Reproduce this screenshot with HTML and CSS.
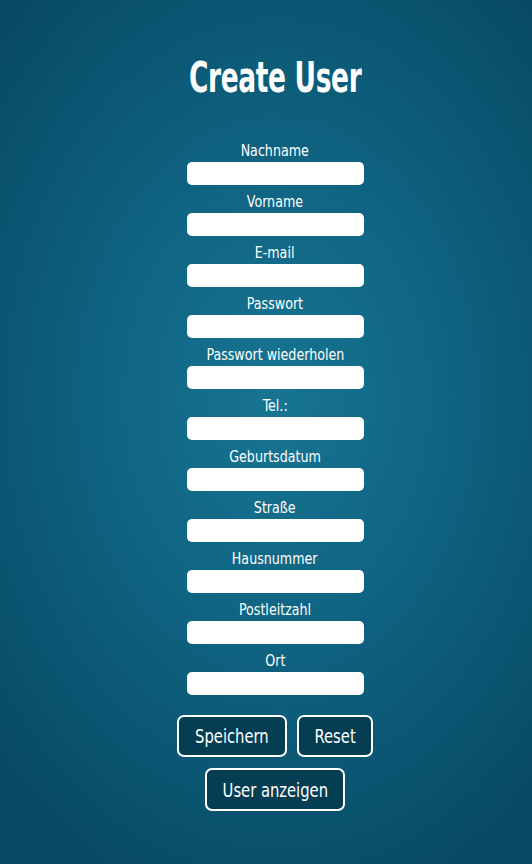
FILE: index.html
```html
<!DOCTYPE html>
<html lang="de">
<head>
<meta charset="utf-8">
<title>Create User</title>
<link rel="stylesheet" href="styles.css">
</head>
<body>
<main class="page">
  <h1 class="title"><span>Create User</span></h1>
  <form class="form">
    <label class="field"><span class="label">Nachname</span><input class="input" type="text"></label>
    <label class="field"><span class="label">Vorname</span><input class="input" type="text"></label>
    <label class="field"><span class="label">E-mail</span><input class="input" type="text"></label>
    <label class="field"><span class="label">Passwort</span><input class="input" type="password"></label>
    <label class="field"><span class="label">Passwort wiederholen</span><input class="input" type="password"></label>
    <label class="field"><span class="label">Tel.:</span><input class="input" type="text"></label>
    <label class="field"><span class="label">Geburtsdatum</span><input class="input" type="text"></label>
    <label class="field"><span class="label">Straße</span><input class="input" type="text"></label>
    <label class="field"><span class="label">Hausnummer</span><input class="input" type="text"></label>
    <label class="field"><span class="label">Postleitzahl</span><input class="input" type="text"></label>
    <label class="field"><span class="label">Ort</span><input class="input" type="text"></label>
    <div class="actions">
      <div class="row">
        <button type="button" class="btn btn-save"><span>Speichern</span></button>
        <button type="reset" class="btn btn-reset"><span>Reset</span></button>
      </div>
      <div class="row">
        <button type="button" class="btn btn-show"><span>User anzeigen</span></button>
      </div>
    </div>
  </form>
</main>
</body>
</html>
```
FILE: styles.css
```css
html, body {
  margin: 0;
  padding: 0;
  height: 100%;
}
body {
  background: radial-gradient(ellipse 70% 60% at 52% 46%, #177592 0%, #0f6482 45%, #0a5470 80%, #084b64 100%);
  color: #ffffff;
  font-family: "DejaVu Sans", sans-serif;
  font-stretch: condensed;
  overflow: hidden;
}
.page {
  box-sizing: border-box;
  height: 100%;
  padding: 52px 0 0 18px;
  display: flex;
  flex-direction: column;
  align-items: center;
}
.title {
  margin: 0 0 37px;
  font-size: 42px;
  line-height: 52px;
  font-weight: bold;
  text-align: center;
}
.title span {
  display: inline-block;
  transform: scaleX(0.7);
  letter-spacing: -0.5px;
}
.form {
  display: flex;
  flex-direction: column;
  align-items: center;
  width: 177px;
}
.field {
  display: flex;
  flex-direction: column;
  align-items: center;
  width: 177px;
  margin-bottom: 7px;
}
.label {
  display: block;
  font-size: 16px;
  line-height: 20px;
  margin-bottom: 1px;
  white-space: nowrap;
  transform: scaleX(0.88);
}
.input {
  box-sizing: border-box;
  width: 177px;
  height: 23px;
  margin: 0;
  border: none;
  border-radius: 5px;
  background: #ffffff;
  padding: 0 6px;
}
.actions {
  display: flex;
  flex-direction: column;
  align-items: center;
  gap: 11px;
  margin-top: 13px;
}
.row {
  display: flex;
  justify-content: center;
  gap: 10px;
}
.btn {
  box-sizing: border-box;
  height: 42px;
  border: 2px solid #ffffff;
  border-radius: 7px;
  background: #053d53;
  color: #ffffff;
  font-family: "DejaVu Sans", sans-serif;
  font-stretch: condensed;
  font-size: 20px;
  line-height: 24px;
  padding: 0;
  display: flex;
  align-items: center;
  justify-content: center;
  cursor: pointer;
}
.btn span {
  display: inline-block;
  white-space: nowrap;
  transform: scaleX(0.82);
}
.btn-save { width: 110px; }
.btn-reset { width: 76px; }
.btn-show { width: 140px; height: 43px; }
```
